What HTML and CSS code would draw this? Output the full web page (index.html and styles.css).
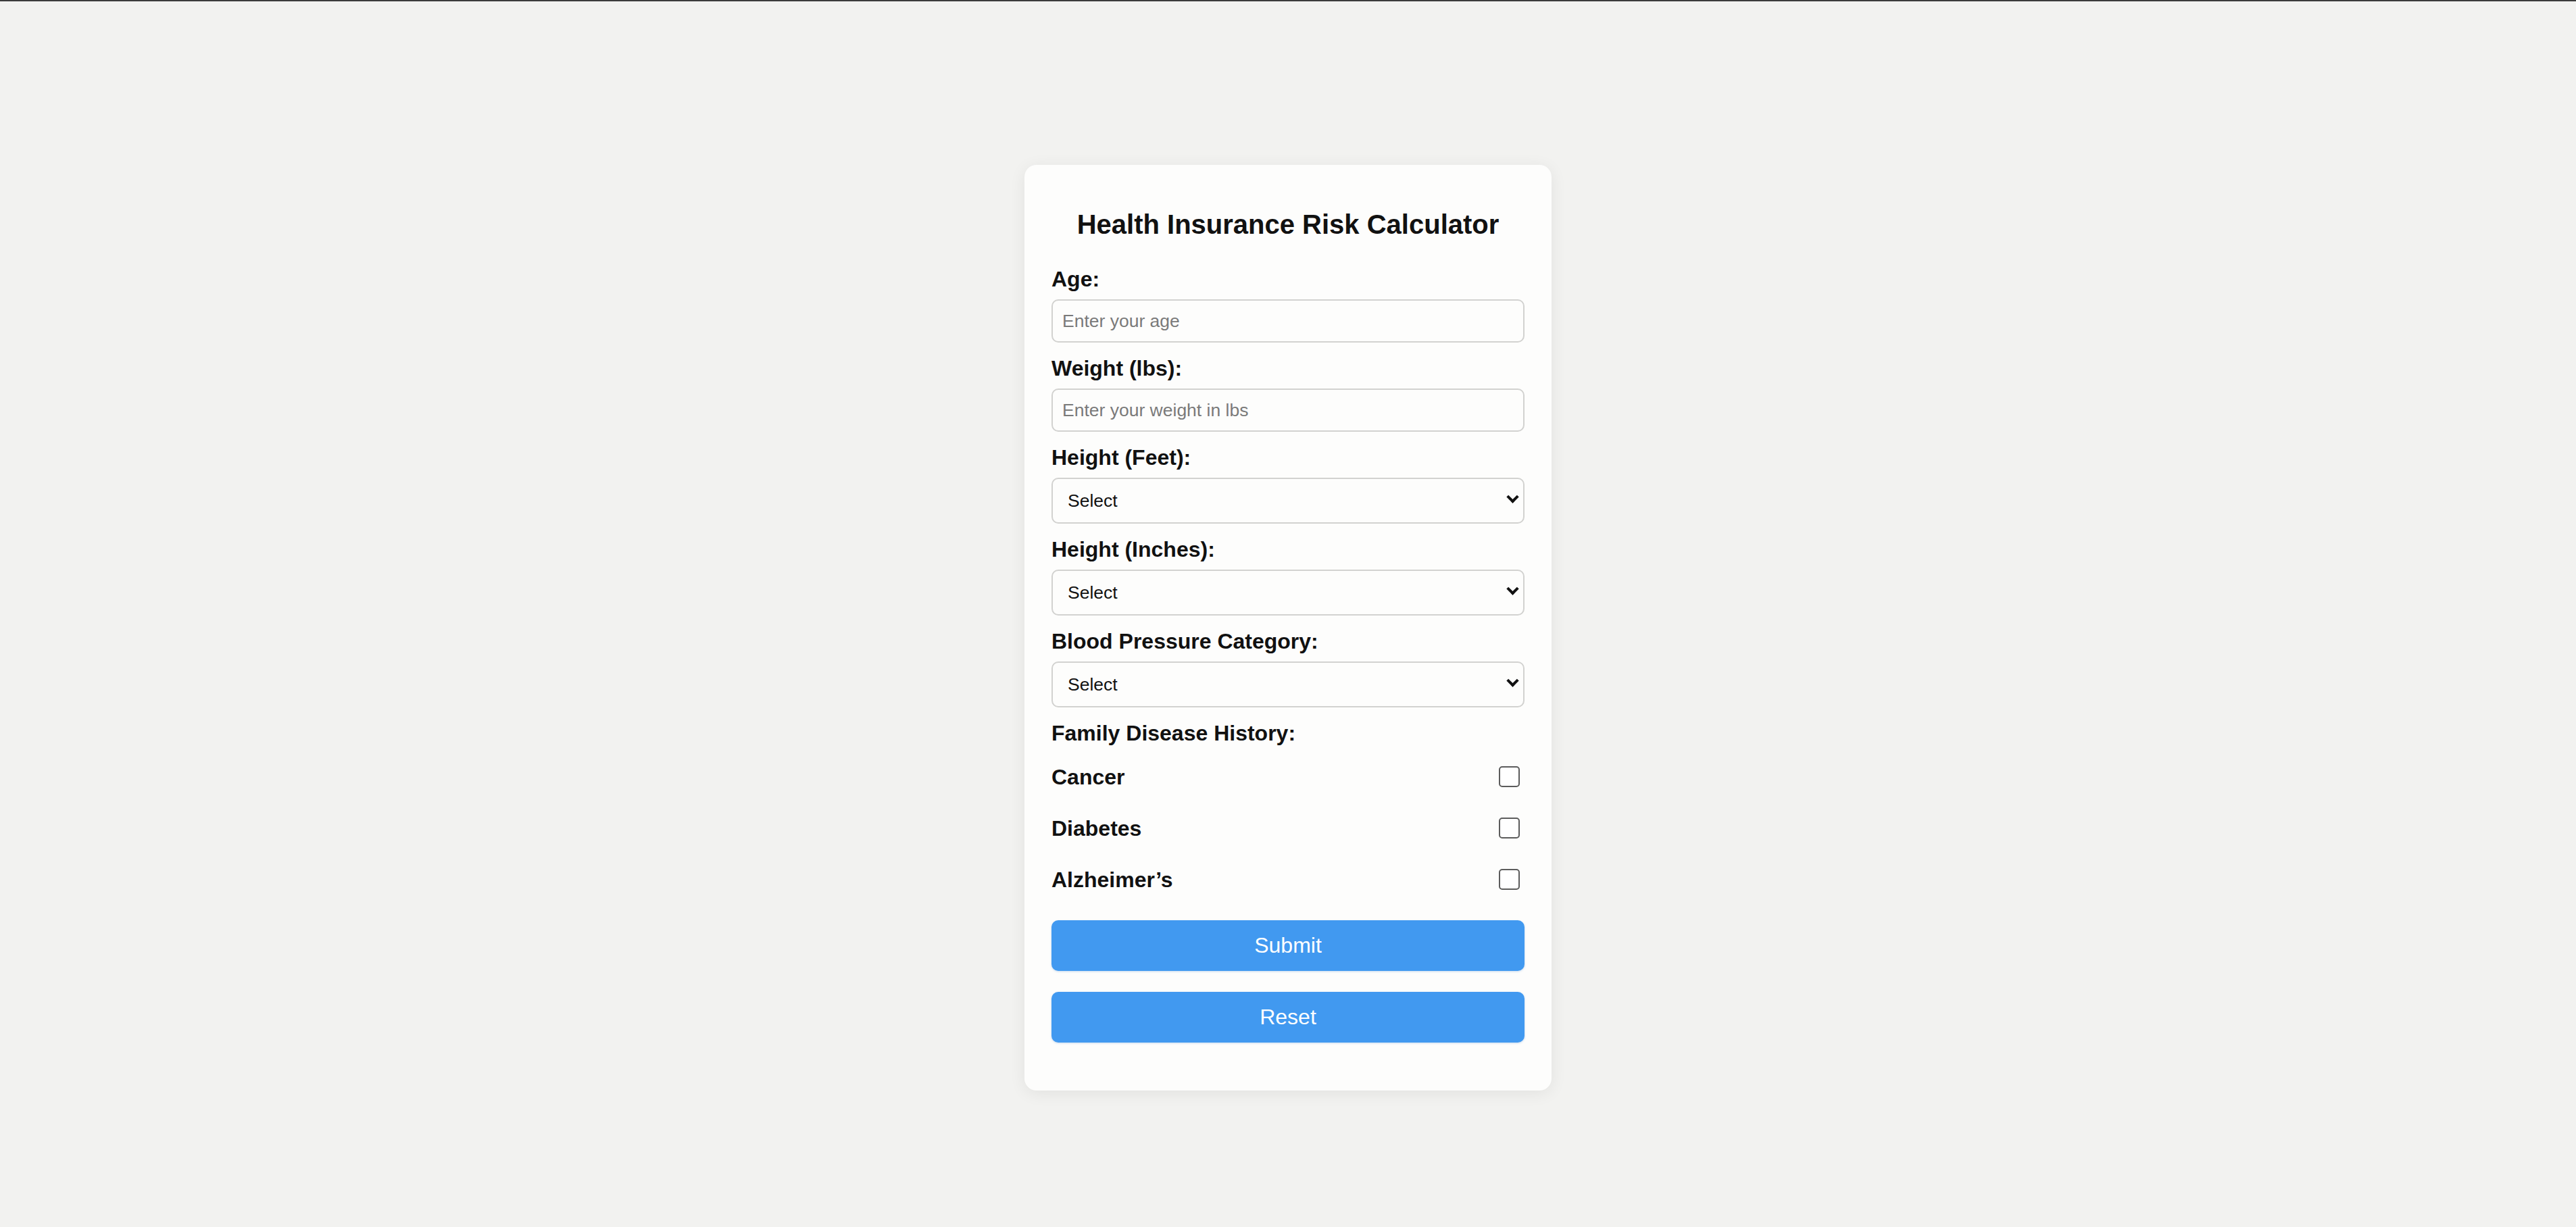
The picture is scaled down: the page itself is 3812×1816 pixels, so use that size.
FILE: index.html
```html
<!DOCTYPE html>
<html lang="en">
<head>
<meta charset="utf-8">
<title>Health Insurance Risk Calculator</title>
<link rel="stylesheet" href="styles.css">
</head>
<body>
  <div class="card">
    <h2 class="title">Health Insurance Risk Calculator</h2>
    <form class="form">
      <label class="label" for="age">Age:</label>
      <input class="field" id="age" type="number" placeholder="Enter your age">

      <label class="label" for="weight">Weight (lbs):</label>
      <input class="field" id="weight" type="number" placeholder="Enter your weight in lbs">

      <label class="label" for="feet">Height (Feet):</label>
      <div class="select-wrap">
        <select class="field select" id="feet"><option>Select</option></select>
      </div>

      <label class="label" for="inches">Height (Inches):</label>
      <div class="select-wrap">
        <select class="field select" id="inches"><option>Select</option></select>
      </div>

      <label class="label" for="bp">Blood Pressure Category:</label>
      <div class="select-wrap">
        <select class="field select" id="bp"><option>Select</option></select>
      </div>

      <label class="label">Family Disease History:</label>
      <div class="checks">
        <div class="check-row"><label class="check-label" for="c1">Cancer</label><input class="checkbox" id="c1" type="checkbox"></div>
        <div class="check-row"><label class="check-label" for="c2">Diabetes</label><input class="checkbox" id="c2" type="checkbox"></div>
        <div class="check-row"><label class="check-label" for="c3">Alzheimer’s</label><input class="checkbox" id="c3" type="checkbox"></div>
      </div>

      <button class="btn btn-first" type="button">Submit</button>
      <button class="btn" type="reset">Reset</button>
    </form>
  </div>
</body>
</html>
```

FILE: styles.css
```css
html, body {
  margin: 0;
  padding: 0;
}

body {
  background: #f2f2f0;
  border-top: 2px solid #3c3c3c;
  min-height: 1814px;
  box-sizing: border-box;
  padding-top: 242px;
  display: flex;
  justify-content: center;
  align-items: flex-start;
  font-family: "Liberation Sans", Arial, sans-serif;
  color: #111;
}

.card {
  width: 780px;
  box-sizing: border-box;
  padding: 40px;
  background: #fdfdfc;
  border-radius: 18px;
  box-shadow: 0 4px 24px rgba(0, 0, 0, 0.07);
}

.title {
  margin: 25px 0 40px;
  font-size: 40px;
  line-height: 46px;
  font-weight: bold;
  text-align: center;
  color: #111;
}

.form {
  margin: 0;
}

.label {
  display: block;
  font-size: 32px;
  line-height: 37px;
  font-weight: bold;
  margin-bottom: 11px;
  color: #111;
}

.field {
  display: block;
  width: 100%;
  height: 64px;
  box-sizing: border-box;
  margin: 0 0 20px;
  padding: 0 14px;
  border: 2px solid #d2d2d0;
  border-radius: 10px;
  background: #fdfdfc;
  font-family: "Liberation Sans", Arial, sans-serif;
  font-size: 26.5px;
  color: #111;
  outline: none;
}

.field::placeholder {
  color: #7a7a7a;
}

.select-wrap {
  position: relative;
}

.select {
  appearance: none;
  -webkit-appearance: none;
  height: 68px;
  padding: 0 22px;
}

.select-wrap::after {
  content: "";
  position: absolute;
  right: 11px;
  top: 34px;
  margin-top: -12px;
  width: 9px;
  height: 9px;
  border-right: 4px solid #111;
  border-bottom: 4px solid #111;
  transform: rotate(45deg);
  pointer-events: none;
}

.checks {
  display: flex;
  flex-direction: column;
  gap: 8px;
}

.check-row {
  display: flex;
  justify-content: space-between;
  align-items: center;
  height: 68px;
}

.check-label {
  font-size: 32px;
  line-height: 37px;
  font-weight: bold;
  color: #111;
  padding-top: 3px;
}

.checkbox {
  appearance: none;
  -webkit-appearance: none;
  width: 31px;
  height: 31px;
  box-sizing: border-box;
  margin: 0 7px 0 0;
  border: 2px solid #5c5c5c;
  border-radius: 5px;
  background: #fff;
}

.btn {
  display: block;
  width: 100%;
  height: 75px;
  margin: 0 0 31px;
  border: none;
  border-radius: 10px;
  background: #4199f0;
  color: #fff;
  font-family: "Liberation Sans", Arial, sans-serif;
  font-size: 32px;
  box-shadow: 0 1px 3px rgba(30, 110, 200, 0.25);
}

.btn-first {
  margin-top: 27px;
}
```
